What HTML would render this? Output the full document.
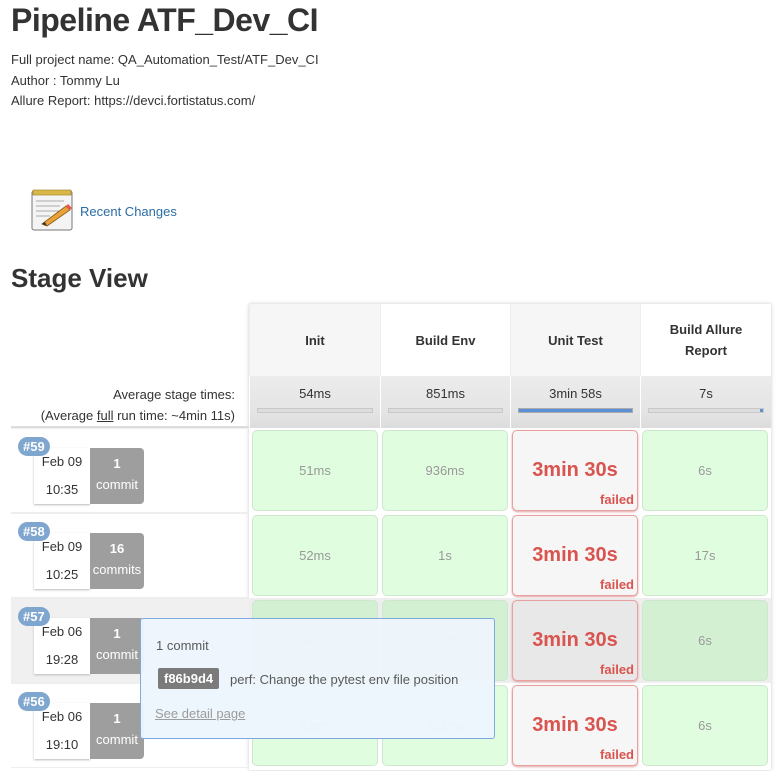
<!DOCTYPE html>
<html><head><meta charset="utf-8"><style>
*{box-sizing:border-box;margin:0;padding:0}
body{width:781px;height:771px;overflow:hidden;background:#fff;font-family:"Liberation Sans",sans-serif;color:#333;position:relative}
.a{position:absolute}
h1{position:absolute;left:11px;top:2px;font-size:32px;font-weight:bold;color:#333;letter-spacing:-0.5px}
.info{position:absolute;left:11px;top:50px;font-size:13px;line-height:20.5px;color:#333}
.rc{position:absolute;left:80px;top:204px;font-size:13px;color:#2a6ca5}
h2{position:absolute;left:11px;top:263px;font-size:26px;font-weight:bold;color:#333}
.hd{position:absolute;top:304px;height:72px;display:flex;align-items:center;justify-content:center;text-align:center;font-size:13px;font-weight:bold;line-height:21px;border-left:1px solid #eee}
.av{position:absolute;top:376px;height:52px;background:linear-gradient(#ececec,#e4e4e4 70%,#dcdcdc);text-align:center;font-size:13px;padding-top:10px;border-left:1px solid #fff}
.bar{position:absolute;left:7px;right:7px;top:32px;height:5px;background:#ddd;border:1px solid #c8c8c8}
.cell{position:absolute;border-radius:5px;border:1px solid #cfe6cf;background:#e0fde0;display:flex;align-items:center;justify-content:center;font-size:13px;color:#999}
.fail{background:#f6f6f6;border:1px solid #e9a0a0;box-shadow:0 1px 2px #e0a0a0;color:#d9534f;font-size:20px;font-weight:bold}
.fail span{position:absolute;right:3px;bottom:3px;font-size:13px}
.row{position:absolute;left:11px;width:238px;height:85px;border-bottom:1px solid #eee;border-top:1px solid #eee}
.badge{position:absolute;left:7px;top:8px;background:#7fa6cf;color:#fff;font-weight:bold;font-size:13px;padding:2px 5px;border-radius:10px;z-index:3}
.date{position:absolute;left:23px;top:19px;width:56px;height:56px;background:#fff;box-shadow:0 1px 2px #bbb;font-size:13px;text-align:center;line-height:28px}
.cm{position:absolute;left:79px;top:19px;width:54px;height:56px;background:#9e9e9e;color:#fff;border-radius:0 4px 4px 0;text-align:center;font-size:13px;line-height:21px;padding-top:5px;overflow:hidden;white-space:nowrap}
</style></head><body>
<h1>Pipeline ATF_Dev_CI</h1>
<div class="info">Full project name: QA_Automation_Test/ATF_Dev_CI<br>Author : Tommy Lu<br>Allure Report: https://devci.fortistatus.com/</div>
<svg class="a" style="left:30px;top:188px" width="44" height="44" viewBox="0 0 44 44">
<rect x="2" y="3" width="40" height="39" rx="2" fill="#f4f4f4" stroke="#777"/>
<rect x="3" y="2" width="38" height="5" fill="#d9b84a" stroke="#9a7a20" stroke-width=".6"/>
<g stroke="#aaa"><line x1="6" y1="13" x2="34" y2="13"/><line x1="6" y1="18" x2="30" y2="18"/><line x1="6" y1="23" x2="30" y2="23"/><line x1="6" y1="28" x2="20" y2="28"/></g>
<path d="M12 36 L36 18 L40 22 L17 38 Z" fill="#e9a23b" stroke="#8a5a10" stroke-width=".8"/>
<path d="M12 36 L15 34 L17 38 Z" fill="#333"/><path d="M36 18 L38 16 L42 20 L40 22Z" fill="#e55"/>
</svg>
<div class="rc">Recent Changes</div>
<h2>Stage View</h2>
<div class="a" style="left:249px;top:304px;width:522px;height:466px;box-shadow:0 0 4px #ccc"></div>
<div class="hd" style="left:249px;width:131px;background:#f6f6f6">Init</div>
<div class="hd" style="left:380px;width:130px;background:#fff">Build Env</div>
<div class="hd" style="left:510px;width:130px;background:#f6f6f6">Unit Test</div>
<div class="hd" style="left:640px;width:131px;background:#fff">Build Allure<br>Report</div>
<div class="a" style="left:11px;top:376px;width:238px;height:52px;text-align:right;padding-right:14px;font-size:13px;line-height:21px;padding-top:8px;border-bottom:2px solid #ddd">Average stage times:<br>(Average <u>full</u> run time: ~4min 11s)</div>
<div class="av" style="left:249px;width:131px">54ms<div class="bar"></div></div>
<div class="av" style="left:380px;width:130px">851ms<div class="bar"></div></div>
<div class="av" style="left:510px;width:130px">3min 58s<div class="bar" style="background:#5b8fd6;border-color:#aaa"></div></div>
<div class="av" style="left:640px;width:131px">7s<div class="bar"><div style="position:absolute;right:0;top:0;width:3px;height:3px;background:#5b8fd6"></div></div></div>

<div class="row" style="top:428px"><div class="badge">#59</div><div class="date">Feb 09<br>10:35</div><div class="cm"><b>1</b><br>commit</div></div>
<div class="row" style="top:513px"><div class="badge">#58</div><div class="date">Feb 09<br>10:25</div><div class="cm"><b>16</b><br>commits</div></div>
<div class="row" style="top:598px;background:#f0f0f0"><div class="badge">#57</div><div class="date">Feb 06<br>19:28</div><div class="cm"><b>1</b><br>commit</div></div>
<div class="row" style="top:683px"><div class="badge">#56</div><div class="date">Feb 06<br>19:10</div><div class="cm"><b>1</b><br>commit</div></div>

<div class="cell" style="left:252px;top:430px;width:126px;height:81px">51ms</div>
<div class="cell" style="left:382px;top:430px;width:126px;height:81px">936ms</div>
<div class="cell fail" style="left:512px;top:430px;width:126px;height:81px">3min 30s<span>failed</span></div>
<div class="cell" style="left:642px;top:430px;width:126px;height:81px">6s</div>

<div class="cell" style="left:252px;top:515px;width:126px;height:81px">52ms</div>
<div class="cell" style="left:382px;top:515px;width:126px;height:81px">1s</div>
<div class="cell fail" style="left:512px;top:515px;width:126px;height:81px">3min 30s<span>failed</span></div>
<div class="cell" style="left:642px;top:515px;width:126px;height:81px">17s</div>

<div class="a" style="left:249px;top:598px;width:522px;height:85px;background:#eee"></div>
<div class="cell" style="left:252px;top:600px;width:126px;height:81px;background:#d3f0d3">54ms</div>
<div class="cell" style="left:382px;top:600px;width:126px;height:81px;background:#d3f0d3">832ms</div>
<div class="cell fail" style="left:512px;top:600px;width:126px;height:81px;background:#e8e8e8">3min 30s<span>failed</span></div>
<div class="cell" style="left:642px;top:600px;width:126px;height:81px;background:#d3f0d3">6s</div>

<div class="cell" style="left:252px;top:685px;width:126px;height:81px">52ms</div>
<div class="cell" style="left:382px;top:685px;width:126px;height:81px">703ms</div>
<div class="cell fail" style="left:512px;top:685px;width:126px;height:81px">3min 30s<span>failed</span></div>
<div class="cell" style="left:642px;top:685px;width:126px;height:81px">6s</div>

<div class="a" style="left:140px;top:618px;width:355px;height:121px;background:#eef6fd;border:1px solid #7aa7de;border-radius:3px;opacity:.97;font-size:13px;color:#555;z-index:5">
<div class="a" style="left:15px;top:19px">1 commit</div>
<div class="a" style="left:17px;top:49px;background:#777;color:#fff;font-weight:bold;padding:3px 6px;border-radius:2px">f86b9d4</div>
<div class="a" style="left:89px;top:53px">perf: Change the pytest env file position</div>
<div class="a" style="left:14px;top:87px;color:#999;text-decoration:underline">See detail page</div>
</div>
</body></html>
